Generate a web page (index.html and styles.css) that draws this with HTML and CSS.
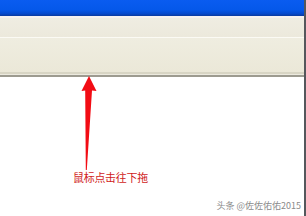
FILE: index.html
```html
<!DOCTYPE html>
<html>
<head>
<meta charset="utf-8">
<link rel="stylesheet" href="styles.css">
</head>
<body>
<div class="window">
  <div class="titlebar"></div>
  <div class="hl"></div>
  <div class="toolbar"></div>
  <div class="sep"></div>
  <div class="toolbar2"></div>
  <div class="bottom-edge"></div>
  <div class="content">
    <div class="note">鼠标点击往下拖</div>
    <div class="watermark">头条 @佐佐佑佑2015</div>
  </div>
  <svg class="arrow" width="306" height="216" viewBox="0 0 306 216">
    <polygon points="89,76 96.5,91 92,90.5 86.8,170 85.8,170 85.2,90.5 81.5,91" fill="#f20c14"/>
  </svg>
</div>
</body>
</html>
```

FILE: styles.css
```css
html, body {
  margin: 0;
  padding: 0;
  background: #ffffff;
}
.window {
  position: relative;
  width: 306px;
  height: 216px;
  display: flex;
  flex-direction: column;
  box-sizing: border-box;
  border-right: 2px solid #55575c;
  overflow: hidden;
}
.titlebar {
  height: 16px;
  flex: none;
  background: linear-gradient(#0a5cf0 0%, #0558ea 60%, #0449cc 85%, #0a3a9e 100%);
}
.hl {
  height: 2px;
  flex: none;
  background: #f6f2f0;
}
.toolbar {
  height: 19px;
  flex: none;
  background: linear-gradient(#efede2, #ece9dc);
}
.sep {
  height: 1px;
  flex: none;
  background: #fbfaf4;
}
.toolbar2 {
  height: 34px;
  flex: none;
  background: linear-gradient(#efede0, #ebe8d8);
}
.bottom-edge {
  height: 5px;
  flex: none;
  background: linear-gradient(#d8d5c4 0, #d8d5c4 2px, #eceadf 2px, #eceadf 3px, #9d9b90 3px, #9d9b90 5px);
}
.content {
  flex: 1;
  background: #ffffff;
  position: relative;
  display: flex;
  flex-direction: column;
  padding: 93px 0 0 73px;
}
.note {
  font-family: "Noto Sans CJK SC", sans-serif;
  font-size: 11px;
  line-height: 14px;
  color: #d01c1c;
  letter-spacing: -0.3px;
}
.watermark {
  font-family: "Noto Sans CJK SC", sans-serif;
  font-size: 9px;
  line-height: 12px;
  color: #8a8a8a;
  align-self: flex-end;
  margin: 16px 3px 0 0;
  text-shadow: 0 0 1px #fff;
}
.arrow {
  position: absolute;
  left: 0;
  top: 0;
  pointer-events: none;
}
```
